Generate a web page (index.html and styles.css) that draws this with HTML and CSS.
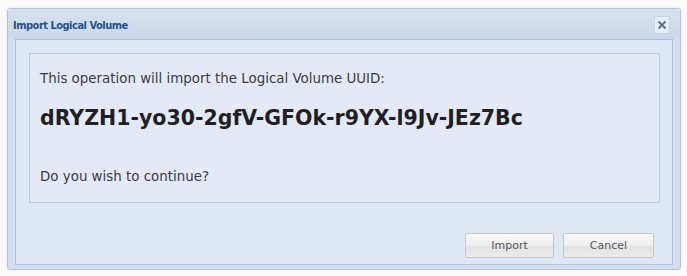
FILE: index.html
```html
<!DOCTYPE html>
<html lang="en">

<head>
  <meta charset="UTF-8">
  <title>Import Logical Volume</title>
  <link rel="stylesheet" href="styles.css">
</head>

<body>
  <div class="window">
    <div class="window-header">
      <span class="window-title">Import Logical Volume</span>
      <a class="close-btn" href="javascript:void(0)">
        <svg width="10" height="10" viewBox="0 0 10 10">
          <path d="M1.5 1.5 L8.5 8.5 M8.5 1.5 L1.5 8.5" stroke="#5a6f8c" stroke-width="1.8" fill="none" />
        </svg>
      </a>
    </div>
    <div class="window-body">
      <div class="panel">
        <p class="msg">This operation will import the Logical Volume UUID:</p>
        <p class="uuid">dRYZH1-yo30-2gfV-GFOk-r9YX-l9Jv-JEz7Bc</p>
        <p class="msg question">Do you wish to continue?</p>
      </div>
      <div class="toolbar">
        <button class="btn">Import</button>
        <button class="btn">Cancel</button>
      </div>
    </div>
  </div>
</body>

</html>
```

FILE: styles.css
```css
body {
  margin: 0;
  padding: 0;
  background: #fafafa;
  font-family: "DejaVu Sans", Verdana, sans-serif;
}

.window {
  margin: 8px 0 0 7px;
  width: 672px;
  height: 256px;
  border: 1px solid #b3c3d8;
  border-radius: 3px;
  background: #d3dfee;
  padding: 0 0 4px;
  box-sizing: content-box;
  box-shadow: 0 0 2px #dde3ea;
}

.window-header {
  height: 30px;
  display: flex;
  align-items: center;
  justify-content: space-between;
  padding: 0 10px 0 5px;
  background: linear-gradient(#d7e2f0, #cad7e7);
}

.window-title {
  font-family: "DejaVu Sans Condensed", "DejaVu Sans", sans-serif;
  font-weight: bold;
  font-size: 11px;
  color: #25508d;
  letter-spacing: -0.5px;
  padding-top: 2px;
}

.close-btn {
  width: 14px;
  height: 16px;
  display: flex;
  align-items: center;
  justify-content: center;
  background: #e7eef7;
  border: 1px solid #c4d3e5;
  margin-top: 1px;
}

.window-body {
  height: 211px;
  margin: 0 7px;
  border: 1px solid #a9c0de;
  background: #dfe7f4;
  padding: 13px 12px 0 13px;
  box-sizing: content-box;
}

.panel {
  height: 148px;
  border: 1px solid #b9cbe2;
  background: #e3eaf6;
  padding: 0 0 0 10px;
}

.msg {
  margin: 17px 0 0;
  font-size: 13.4px;
  color: #3a3a44;
  line-height: 16px;
}

.uuid {
  margin: 19px 0 0;
  font-size: 20.5px;
  font-weight: bold;
  color: #1f1f24;
  line-height: 24px;
}

.question {
  margin-top: 39px;
}

.toolbar {
  display: flex;
  justify-content: flex-end;
  gap: 9px;
  padding: 30px 6px 0 0;
}

.btn {
  width: 89px;
  height: 25px;
  font-family: "DejaVu Sans", Verdana, sans-serif;
  font-size: 11px;
  color: #555;
  border: 1px solid #c3c7cc;
  border-radius: 2px;
  background: linear-gradient(#fbfbfb, #ececec 50%, #e2e2e2 51%, #ebebeb);
  padding: 0;
}

.btn + .btn {
  width: 91px;
}
```
